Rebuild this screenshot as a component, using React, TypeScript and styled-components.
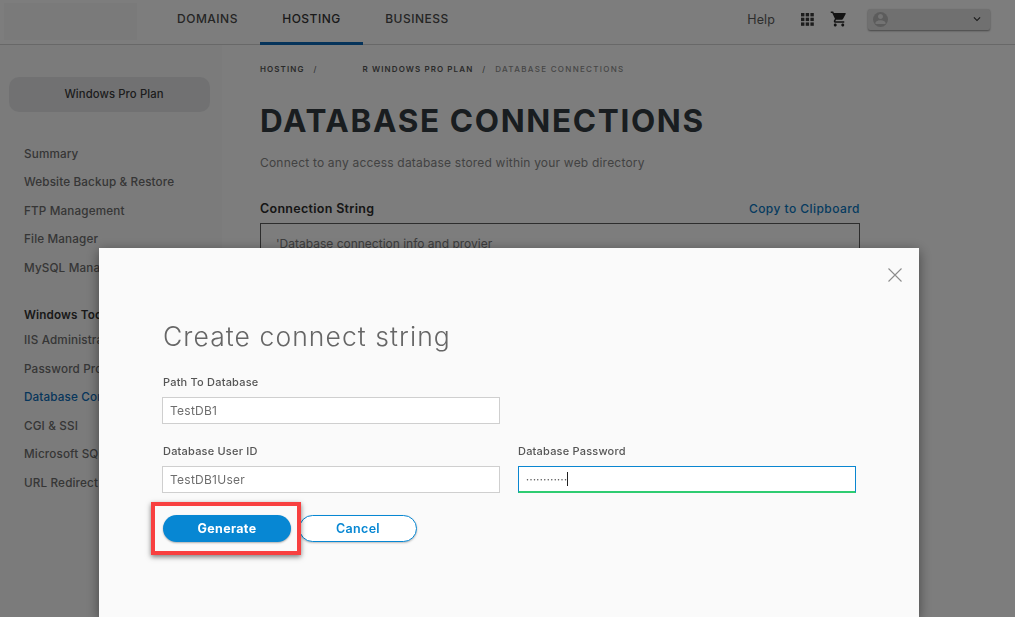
import React from 'react';
import styled, { createGlobalStyle } from 'styled-components';
import { MdShoppingCart, MdPerson, MdKeyboardArrowDown } from 'react-icons/md';

const sideLinks = ['Summary', 'Website Backup & Restore', 'FTP Management', 'File Manager', 'MySQL Management'];
const toolLinks = ['IIS Administration', 'Password Protection', 'Database Connections', 'CGI & SSI', 'Microsoft SQL Server', 'URL Redirect'];

const App = () => (
  <>
    <GlobalStyle />
    <Page>
      <Header>
        <LogoBlock />
        <Nav>
          <NavItem>DOMAINS</NavItem>
          <NavItem $active>HOSTING</NavItem>
          <NavItem>BUSINESS</NavItem>
        </Nav>
        <HeaderRight>
          <HelpLink>Help</HelpLink>
          <svg width="13" height="13" viewBox="0 0 13 13" fill="#3a3a3a">
            {[0, 4.7, 9.4].map(x => [0, 4.7, 9.4].map(y => <rect key={`${x}-${y}`} x={x} y={y} width="3.4" height="3.4" />))}
          </svg>
          <MdShoppingCart size={18} color="#262626" />
          <UserSelect>
            <UserAvatar><MdPerson size={18} color="#e6e6e6" /></UserAvatar>
            <MdKeyboardArrowDown size={14} color="#333" />
          </UserSelect>
        </HeaderRight>
      </Header>
      <Body>
        <Sidebar>
          <PlanButton>Windows Pro Plan</PlanButton>
          <SideList>
            {sideLinks.map(l => <SideLink key={l}>{l}</SideLink>)}
          </SideList>
          <SideHeading>Windows Tools</SideHeading>
          <SideList>
            {toolLinks.map(l => <SideLink key={l} $active={l === 'Database Connections'}>{l}</SideLink>)}
          </SideList>
        </Sidebar>
        <Main>
          <Breadcrumb>
            <span>HOSTING</span>
            <Slash>/</Slash>
            <CrumbGap />
            <span>R WINDOWS PRO PLAN</span>
            <Slash>/</Slash>
            <CrumbLast>DATABASE CONNECTIONS</CrumbLast>
          </Breadcrumb>
          <Title>DATABASE CONNECTIONS</Title>
          <Subtitle>Connect to any access database stored within your web directory</Subtitle>
          <StringHeader>
            <StringLabel>Connection String</StringLabel>
            <CopyLink>Copy to Clipboard</CopyLink>
          </StringHeader>
          <StringBox>'Database connection info and provier</StringBox>
        </Main>
      </Body>
      <Overlay />
      <Modal>
        <CloseButton aria-label="Close">
          <svg width="14" height="14" viewBox="0 0 14 14" stroke="#8c8c8c" strokeWidth="1.1" fill="none">
            <path d="M0.5 0.5 L13.5 13.5 M13.5 0.5 L0.5 13.5" />
          </svg>
        </CloseButton>
        <ModalTitle>Create connect string</ModalTitle>
        <FormRow>
          <Field>
            <FieldLabel $inset>Path To Database</FieldLabel>
            <TextInput readOnly value="TestDB1" />
          </Field>
        </FormRow>
        <FormRow>
          <Field>
            <FieldLabel $inset>Database User ID</FieldLabel>
            <TextInput readOnly value="TestDB1User" />
          </Field>
          <Field>
            <FieldLabel>Database Password</FieldLabel>
            <PasswordBox>
              <Dots>············</Dots>
              <Caret />
            </PasswordBox>
          </Field>
        </FormRow>
        <Actions>
          <PrimaryButton>
            Generate
            <Highlight />
          </PrimaryButton>
          <SecondaryButton>Cancel</SecondaryButton>
        </Actions>
      </Modal>
    </Page>
  </>
);

export default App;

const GlobalStyle = createGlobalStyle`
  html, body {
    margin: 0;
    height: 100%;
    overflow: hidden;
  }
  body {
    font-family: Inter, "Open Sans", "Liberation Sans", sans-serif;
    background: #fbfbfb;
  }
  * { box-sizing: border-box; }
`;

const Page = styled.div`
  width: 1015px;
  height: 617px;
  overflow: hidden;
  background: #fbfbfb;
`;

const Header = styled.header`
  display: flex;
  align-items: stretch;
  height: 45px;
  border-bottom: 1px solid #d0d0d0;
  background: #fbfbfb;
`;

const LogoBlock = styled.div`
  width: 133px;
  height: 37px;
  margin: 3px 0 0 4px;
  background: #f4f4f4;
`;

const Nav = styled.nav`
  display: flex;
  margin-left: 23px;
`;

const NavItem = styled.div<{ $active?: boolean }>`
  display: flex;
  align-items: center;
  justify-content: center;
  width: 103px;
  margin-bottom: -1px;
  padding-bottom: 5px;
  font-size: 12px;
  font-weight: 500;
  letter-spacing: 0.5px;
  color: ${p => (p.$active ? '#343434' : '#4a4a4a')};
  border-bottom: 3px solid ${p => (p.$active ? '#0a67b5' : 'transparent')};
  &:first-child {
    width: 95px;
    margin-right: 5px;
  }
  &:last-child { width: 108px; }
`;

const HeaderRight = styled.div`
  display: flex;
  align-items: center;
  margin-left: auto;
  padding: 0 25px 6px 0;
  gap: 16px;
`;

const HelpLink = styled.span`
  margin-right: 10px;
  font-size: 12.5px;
  letter-spacing: 0.1px;
  color: #5a5a5a;
`;

const UserSelect = styled.div`
  display: flex;
  align-items: center;
  justify-content: space-between;
  width: 122px;
  height: 21px;
  margin-left: 4px;
  padding: 0 6px 0 5px;
  background: #e0e0e0;
  border-radius: 2px;
  box-shadow: 0 1px 2px rgba(0, 0, 0, 0.45);
`;

const UserAvatar = styled.div`
  display: flex;
  align-items: center;
  justify-content: center;
  width: 15px;
  height: 15px;
  border-radius: 50%;
  background: #b8b8b8;
  overflow: hidden;
`;

const Body = styled.div`
  display: flex;
  height: 572px;
`;

const Sidebar = styled.aside`
  width: 222px;
  padding: 32px 0 0 9px;
  background: #f6f6f6;
`;

const PlanButton = styled.div`
  display: flex;
  align-items: center;
  justify-content: center;
  width: 201px;
  height: 35px;
  padding: 0 0 1px 9px;
  border-radius: 10px;
  background: #e2e3e5;
  font-size: 11.3px;
  font-weight: 500;
  letter-spacing: 0.1px;
  color: #3a3a3a;
`;

const SideList = styled.div`
  display: flex;
  flex-direction: column;
  gap: 14.2px;
  padding-left: 15px;
  margin-top: 35px;
  &:last-child { margin-top: 11px; }
`;

const SideLink = styled.div<{ $active?: boolean }>`
  height: 14.3px;
  line-height: 14.3px;
  font-size: 11.7px;
  font-weight: 500;
  letter-spacing: 0.15px;
  white-space: nowrap;
  color: ${p => (p.$active ? '#0d6cb8' : '#6c6c6c')};
`;

const SideHeading = styled.div`
  margin: 33px 0 0 15px;
  font-size: 11.7px;
  font-weight: 600;
  letter-spacing: 0.15px;
  line-height: 14px;
  color: #333;
`;

const Main = styled.main`
  width: 600px;
  margin-left: 38px;
  padding-top: 19px;
`;

const Breadcrumb = styled.div`
  display: flex;
  align-items: center;
  height: 10px;
  font-size: 8px;
  font-weight: 600;
  letter-spacing: 1.1px;
  color: #555;
  white-space: nowrap;
`;

const Slash = styled.span`
  margin: 0 9px;
  font-weight: 400;
`;

const CrumbGap = styled.span`
  width: 36px;
`;

const CrumbLast = styled.span`
  font-weight: 500;
  letter-spacing: 1.3px;
  color: #8d8d8d;
`;

const Title = styled.h1`
  margin: 24px 0 0;
  font-size: 31.5px;
  line-height: 46px;
  font-weight: 700;
  letter-spacing: 1.65px;
  color: #333a40;
  white-space: nowrap;
`;

const Subtitle = styled.p`
  margin: 10px 0 0;
  font-size: 12px;
  line-height: 18px;
  letter-spacing: 0.2px;
  color: #858585;
`;

const StringHeader = styled.div`
  display: flex;
  align-items: center;
  justify-content: space-between;
  margin-top: 27px;
  height: 18px;
`;

const StringLabel = styled.span`
  font-size: 12.5px;
  font-weight: 600;
  letter-spacing: 0.3px;
  color: #2c2c2c;
`;

const CopyLink = styled.span`
  font-size: 12px;
  font-weight: 500;
  letter-spacing: 0.45px;
  color: #0a76bf;
`;

const StringBox = styled.div`
  margin-top: 6px;
  height: 120px;
  padding: 11px 15px;
  border: 1px solid #5a5a5a;
  font-size: 12px;
  line-height: 18px;
  color: #7a7a7a;
`;

const Overlay = styled.div`
  position: fixed;
  inset: 0;
  background: rgba(0, 0, 0, 0.5);
`;

const Modal = styled.div`
  position: fixed;
  top: 248px;
  left: 99px;
  width: 820px;
  height: 369px;
  padding: 71px 63px 0;
  background: #fafafa;
  box-shadow: 0 3px 12px rgba(0, 0, 0, 0.45);
`;

const CloseButton = styled.button`
  position: absolute;
  top: 20px;
  right: 17px;
  display: flex;
  padding: 0;
  background: none;
  border: none;
`;

const ModalTitle = styled.h2`
  margin: 0 0 22px;
  padding-left: 1px;
  font-size: 26.5px;
  line-height: 34px;
  font-weight: 300;
  letter-spacing: 1.07px;
  color: #666;
`;

const FormRow = styled.div`
  display: flex;
  gap: 18px;
  margin-bottom: 20px;
`;

const Field = styled.div`
  width: 338px;
`;

const FieldLabel = styled.label<{ $inset?: boolean }>`
  display: block;
  height: 15px;
  margin: 0 0 7px ${p => (p.$inset ? '1px' : '0')};
  font-size: 11px;
  line-height: 15px;
  font-weight: 500;
  letter-spacing: 0.2px;
  color: #555;
`;

const TextInput = styled.input`
  display: block;
  width: 100%;
  height: 27px;
  padding: 0 7px;
  border: 1px solid #cfcfcf;
  border-radius: 0;
  outline: none;
  background: #fff;
  font-family: inherit;
  font-size: 12px;
  letter-spacing: 0.25px;
  color: #6e6e6e;
`;

const PasswordBox = styled.div`
  display: flex;
  align-items: center;
  height: 27px;
  padding: 0 7px;
  background: #fff;
  border: 1px solid #0a86d0;
  border-bottom: 2px solid #2ecc71;
`;

const Dots = styled.span`
  font-size: 9px;
  font-weight: 700;
  letter-spacing: 0.45px;
  color: #555;
`;

const Caret = styled.span`
  width: 1px;
  height: 14px;
  background: #222;
`;

const Actions = styled.div`
  display: flex;
  gap: 8px;
  margin-top: 22px;
  padding-left: 1px;
`;

const PrimaryButton = styled.button`
  position: relative;
  width: 128px;
  height: 27px;
  border: none;
  border-radius: 14px;
  background: #0787d3;
  box-shadow: 0 1px 2px rgba(0, 0, 0, 0.3);
  font-family: inherit;
  font-size: 12.5px;
  font-weight: 700;
  letter-spacing: 0.35px;
  color: #fff;
`;

const Highlight = styled.span`
  position: absolute;
  top: -13px;
  left: -12px;
  width: 150px;
  height: 53px;
  border: 4px solid #f84040;
  box-shadow: 0 2px 5px rgba(0, 0, 0, 0.5);
`;

const SecondaryButton = styled.button`
  width: 118px;
  height: 27px;
  border: 1px solid #0787d3;
  border-radius: 14px;
  background: #fff;
  box-shadow: 0 1px 2px rgba(0, 0, 0, 0.25);
  font-family: inherit;
  font-size: 12.5px;
  font-weight: 600;
  letter-spacing: 0.3px;
  color: #0787d3;
`;
